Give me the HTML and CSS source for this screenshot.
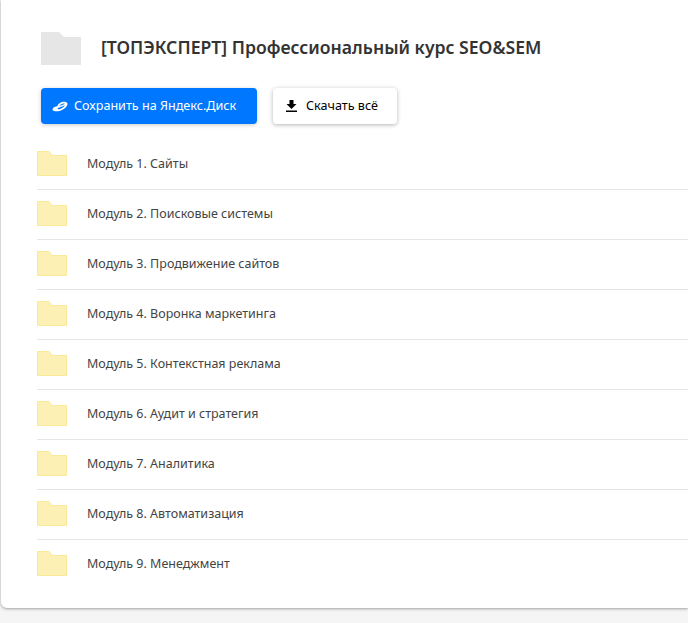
FILE: index.html
```html
<!DOCTYPE html>
<html lang="ru">
<head>
<meta charset="utf-8">
<title>Папка</title>
<link rel="stylesheet" href="styles.css">
</head>
<body>
<main class="card">
  <header class="head">
    <svg class="head-icon" viewBox="0 0 40 33"><path d="M0 0H18L23 5H40V33H0Z" fill="#e6e6e6"/></svg>
    <h1 class="title">[ТОПЭКСПЕРТ] Профессиональный курс SEO&amp;SEM</h1>
  </header>
  <div class="actions">
    <button class="btn btn-primary">
      <svg class="disk" viewBox="0 0 15 10"><path d="M.5 7.500C1 5.500 3.500 5 5 4.800C5.500 2.500 8.500.5 11.500.5C13.500.5 14.800 1.300 14.500 2.800C14 5.800 9 9.500 4.500 9.500C2 9.500 .2 8.800 .5 7.500ZM5.500 6.300C5 7.300 5.800 7.800 7 7.500C9 7 11.500 5.200 12 3.800C10 4.800 7.500 5.800 5.500 6.300ZM6.800 4.500C8.500 4.200 10.500 3.500 12 2.500C10.500 1.800 8 2.800 6.800 4.500Z" fill="#fff" fill-rule="evenodd"/></svg>
      <span class="label">Сохранить на Яндекс.Диск</span>
    </button>
    <button class="btn btn-plain">
      <svg class="dl" viewBox="0 0 11 12"><path d="M3.500 0H7.500V4H10.500L5.500 9L.5 4H3.500ZM0 10.500H11V12H0Z" fill="#000"/></svg>
      <span class="label">Скачать всё</span>
    </button>
  </div>
  <ul class="list">
    <li class="row"><svg class="folder" viewBox="0 0 30 25"><path d="M.5.5H12L15 4.500H29.500V24.500H.5Z" fill="#fdf0b5" stroke="#fbe99a"/></svg><span class="name">Модуль 1. Сайты</span></li>
    <li class="row"><svg class="folder" viewBox="0 0 30 25"><path d="M.5.5H12L15 4.500H29.500V24.500H.5Z" fill="#fdf0b5" stroke="#fbe99a"/></svg><span class="name">Модуль 2. Поисковые системы</span></li>
    <li class="row"><svg class="folder" viewBox="0 0 30 25"><path d="M.5.5H12L15 4.500H29.500V24.500H.5Z" fill="#fdf0b5" stroke="#fbe99a"/></svg><span class="name">Модуль 3. Продвижение сайтов</span></li>
    <li class="row"><svg class="folder" viewBox="0 0 30 25"><path d="M.5.5H12L15 4.500H29.500V24.500H.5Z" fill="#fdf0b5" stroke="#fbe99a"/></svg><span class="name">Модуль 4. Воронка маркетинга</span></li>
    <li class="row"><svg class="folder" viewBox="0 0 30 25"><path d="M.5.5H12L15 4.500H29.500V24.500H.5Z" fill="#fdf0b5" stroke="#fbe99a"/></svg><span class="name">Модуль 5. Контекстная реклама</span></li>
    <li class="row"><svg class="folder" viewBox="0 0 30 25"><path d="M.5.5H12L15 4.500H29.500V24.500H.5Z" fill="#fdf0b5" stroke="#fbe99a"/></svg><span class="name">Модуль 6. Аудит и стратегия</span></li>
    <li class="row"><svg class="folder" viewBox="0 0 30 25"><path d="M.5.5H12L15 4.500H29.500V24.500H.5Z" fill="#fdf0b5" stroke="#fbe99a"/></svg><span class="name">Модуль 7. Аналитика</span></li>
    <li class="row"><svg class="folder" viewBox="0 0 30 25"><path d="M.5.5H12L15 4.500H29.500V24.500H.5Z" fill="#fdf0b5" stroke="#fbe99a"/></svg><span class="name">Модуль 8. Автоматизация</span></li>
    <li class="row"><svg class="folder" viewBox="0 0 30 25"><path d="M.5.5H12L15 4.500H29.500V24.500H.5Z" fill="#fdf0b5" stroke="#fbe99a"/></svg><span class="name">Модуль 9. Менеджмент</span></li>
  </ul>
</main>
</body>
</html>
```
FILE: styles.css
```css
html, body {
  margin: 0;
  height: 623px;
  overflow: hidden;
  background: #f5f5f5;
  font-family: "Noto Sans", "Open Sans", sans-serif;
}
.card {
  box-sizing: border-box;
  height: 608px;
  margin-left: 1px;
  padding: 32px 0 0 36px;
  background: #fff;
  border-radius: 0 0 0 6px;
  box-shadow: 0 1px 3px rgba(0, 0, 0, .35);
}
.head {
  display: flex;
  align-items: center;
  gap: 20px;
  padding-left: 4px;
}
.head-icon {
  width: 40px;
  height: 33px;
  flex: none;
}
.title {
  margin: 0 0 2px;
  font-size: 17.600px;
  font-weight: 600;
  line-height: 31px;
  color: #333;
}
.actions {
  display: flex;
  gap: 16px;
  margin-top: 23px;
  padding-left: 4px;
}
.btn {
  display: flex;
  align-items: center;
  height: 36px;
  padding: 0;
  border: 0;
  border-radius: 4px;
  font: 400 12.600px "Noto Sans", "Open Sans", sans-serif;
}
.label {
  margin-bottom: 2px;
}
.btn-primary {
  width: 216px;
  padding-left: 11px;
  gap: 7px;
  background: #07f;
  color: #fff;
  box-shadow: 0 1px 4px rgba(0, 0, 0, .2);
}
.btn-plain {
  width: 124px;
  padding-left: 13px;
  gap: 9px;
  background: #fff;
  color: #000;
  box-shadow: 0 1px 4px rgba(0, 0, 0, .3);
}
.disk {
  width: 16px;
  height: 11px;
}
.btn-primary .label {
  margin-left: -1px;
}
.dl {
  width: 11px;
  height: 12px;
}
.list {
  list-style: none;
  margin: 16px 0 0;
  padding: 0;
}
.row {
  display: flex;
  align-items: center;
  gap: 20px;
  height: 50px;
  box-sizing: border-box;
  padding-bottom: 2px;
  border-bottom: 1px solid #e5e5e5;
}
.row:last-child {
  border-bottom-color: transparent;
}
.folder {
  width: 30px;
  height: 25px;
  flex: none;
}
.name {
  font-size: 12.500px;
  color: #444;
}
```
